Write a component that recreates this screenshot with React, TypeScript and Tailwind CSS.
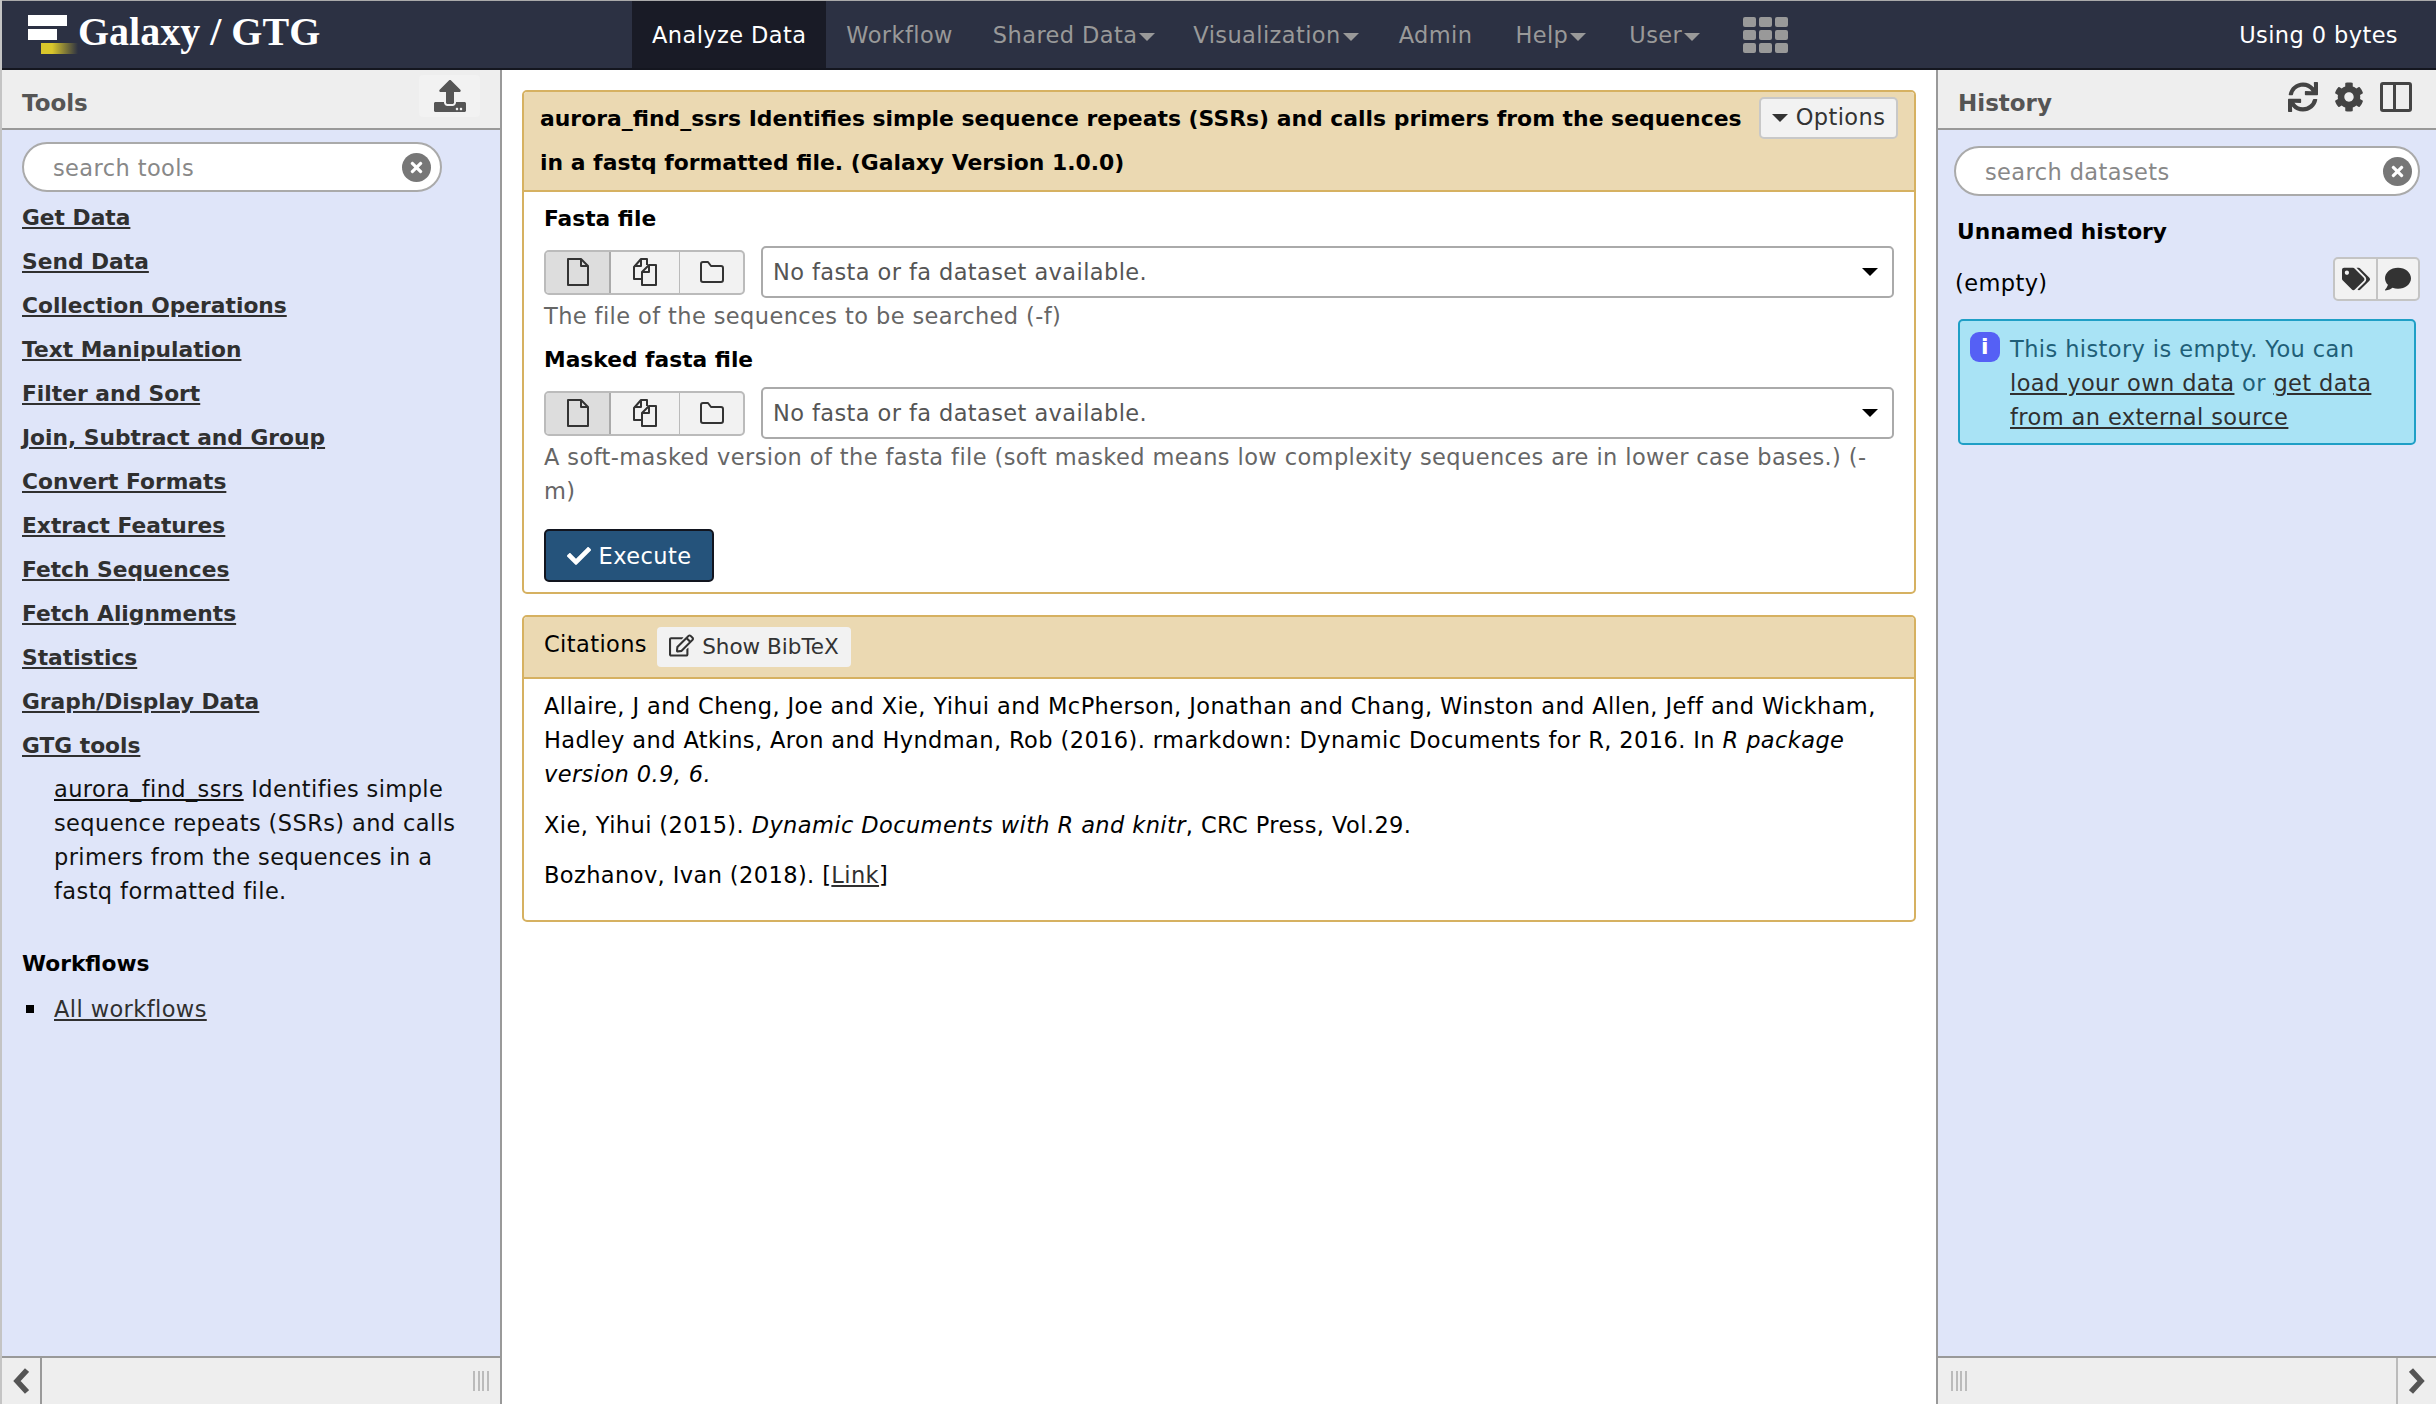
import React from "react";
import {
  FaCheck,
  FaCog,
  FaComment,
  FaRegEdit,
  FaSync,
  FaTags,
  FaTimes,
  FaUpload,
} from "react-icons/fa";

const navItems = [
  { label: "Workflow", className: "" },
  { label: "Shared Data", caret: true, className: "" },
  { label: "Visualization", caret: true, className: "-ml-[2px]" },
  { label: "Admin", className: "" },
  { label: "Help", caret: true, className: "ml-[3px]" },
  { label: "User", caret: true, className: "ml-[3px]" },
];

const toolSections = [
  "Get Data",
  "Send Data",
  "Collection Operations",
  "Text Manipulation",
  "Filter and Sort",
  "Join, Subtract and Group",
  "Convert Formats",
  "Extract Features",
  "Fetch Sequences",
  "Fetch Alignments",
  "Statistics",
  "Graph/Display Data",
  "GTG tools",
];

function Logo() {
  return (
    <svg width="52" height="40" viewBox="0 0 52 40" className="shrink-0">
      <defs>
        <linearGradient id="logoYellow" x1="0" x2="1" y1="0" y2="0">
          <stop offset="0.3" stopColor="#d9c62b" />
          <stop offset="1" stopColor="#d9c62b" stopOpacity="0" />
        </linearGradient>
      </defs>
      <rect x="1" y="0" width="39" height="11" fill="#fff" />
      <rect x="1" y="14" width="29" height="11" fill="#fff" />
      <rect x="14" y="28" width="37" height="11" fill="url(#logoYellow)" />
    </svg>
  );
}

function Caret({ className }: { className: string }) {
  return <span className={`inline-block h-0 w-0 border-x-[8px] border-t-[8px] border-x-transparent ${className}`} />;
}

function NavGrid() {
  return (
    <div className="ml-[23px] grid grid-cols-3 gap-[3px]">
      {Array.from({ length: 9 }).map((_, i) => (
        <span key={i} className="h-[10px] w-[13px] rounded-[2px] bg-[#999]" />
      ))}
    </div>
  );
}

function TopBar() {
  return (
    <header className="flex h-[70px] shrink-0 items-center border-t border-b-2 border-t-[#aaa] border-b-[#14161f] bg-[#2c3143]">
      <div className="flex w-[630px] shrink-0 items-center pl-[25px]">
        <Logo />
        <span className="-ml-[1px] -mt-[6px] [font-family:'Liberation_Serif',serif] text-[40px] leading-none font-bold tracking-normal text-white">
          Galaxy / GTG
        </span>
      </div>
      <nav className="flex h-full items-center text-[22.5px]">
        <a className="flex h-full items-center bg-[#191b26] px-5 pt-[2px] text-white">Analyze Data</a>
        {navItems.map((item) => (
          <a key={item.label} className={`flex items-center px-5 pt-[2px] text-[#999] ${item.className}`}>
            {item.label}
            {item.caret && <Caret className="ml-[2px] mt-[2px] border-t-[#999]" />}
          </a>
        ))}
        <NavGrid />
      </nav>
      <span className="ml-auto pr-[38px] pt-[2px] text-[22.5px] text-white">Using 0 bytes</span>
    </header>
  );
}

function PanelHeader({ title, children }: { title: string; children: React.ReactNode }) {
  return (
    <div className="flex h-[60px] shrink-0 items-center justify-between border-b-2 border-[#999] bg-[#eee] pl-[20px]">
      <span className="pt-[8px] text-[23px] font-bold tracking-normal text-[#555]">{title}</span>
      {children}
    </div>
  );
}

function SearchBox({ placeholder, className }: { placeholder: string; className: string }) {
  return (
    <div className={`flex h-[50px] items-center justify-between rounded-full border-2 border-[#aaa] bg-white pl-[29px] text-[22.5px] text-[#888] ${className}`}>
      <span className="pt-[1px]">{placeholder}</span>
      <ClearIcon />
    </div>
  );
}

function ClearIcon() {
  return (
    <span className="flex h-[29px] w-[29px] items-center justify-center rounded-full bg-[#777] text-white">
      <FaTimes size={17} />
    </span>
  );
}

function Chevron({ dir }: { dir: "left" | "right" }) {
  return (
    <svg width="16" height="26" viewBox="0 0 16 26" fill="none" stroke="#555" strokeWidth="5.5">
      <path d={dir === "left" ? "M14 2 L4 13 L14 24" : "M2 2 L12 13 L2 24"} />
    </svg>
  );
}

function PanelFooter({ side }: { side: "left" | "right" }) {
  const handle = (
    <div className="flex h-[20px] w-[16px] justify-between">
      {[0, 1, 2, 3].map((i) => (
        <span key={i} className="h-full w-[2px] bg-[#bbb]" />
      ))}
    </div>
  );
  return (
    <div className="flex h-[48px] shrink-0 items-center border-t-2 border-[#999] bg-[#eee]">
      {side === "left" ? (
        <>
          <div className="flex h-full w-[40px] items-center justify-center border-r-2 border-[#999]">
            <Chevron dir="left" />
          </div>
          <div className="ml-auto mr-[11px]">{handle}</div>
        </>
      ) : (
        <>
          <div className="ml-[13px]">{handle}</div>
          <div className="ml-auto flex h-full w-[40px] items-center justify-center border-l-2 border-[#bbb]">
            <Chevron dir="right" />
          </div>
        </>
      )}
    </div>
  );
}

function ToolPanel() {
  return (
    <aside className="flex w-[500px] shrink-0 flex-col border-r-2 border-[#999]">
      <PanelHeader title="Tools">
        <span className="mb-[6px] mr-[20px] flex h-[42px] w-[61px] items-center justify-center rounded-[4px] bg-[#f2f2f2] text-[#555]">
          <FaUpload size={32} />
        </span>
      </PanelHeader>
      <div className="flex-1 bg-[#dfe5f9] px-[20px] pt-[12px] text-[22.5px] leading-[34px] text-[#111]">
        <SearchBox placeholder="search tools" className="w-[420px] pr-[9px]" />
        <ul className="mt-[9px] flex flex-col gap-[10px]">
          {toolSections.map((name) => (
            <li key={name} className="text-[21.75px] font-bold tracking-normal text-[#303030]">
              <a className="underline">{name}</a>
            </li>
          ))}
        </ul>
        <p className="mb-0 ml-[32px] mt-[9px] w-[420px]">
          <a className="underline">aurora_find_ssrs</a> Identifies simple sequence repeats (SSRs) and calls primers from the sequences in a fastq formatted file.
        </p>
        <h4 className="mt-[39px] text-[21.75px] font-bold tracking-normal text-black">Workflows</h4>
        <div className="mt-[11px] flex items-center">
          <span className="ml-[4px] h-[8px] w-[8px] bg-black" />
          <a className="ml-[20px] text-[#303030] underline">All workflows</a>
        </div>
      </div>
      <PanelFooter side="left" />
    </aside>
  );
}

function FilesIcon() {
  return (
    <svg width="26" height="30" viewBox="0 0 26 30" fill="none" stroke="#333" strokeWidth="2" strokeLinejoin="round">
      <path d="M10 22 H2 V10 L9 2 H15 V8" />
      <path d="M9 2 V9 H2" />
      <path d="M10 15 L17 8 H24 V28 H10 Z" />
      <path d="M17 8 V15 H10" />
    </svg>
  );
}

function FileIcon() {
  return (
    <svg width="24" height="30" viewBox="0 0 24 30" fill="none" stroke="#333" strokeWidth="2" strokeLinejoin="round">
      <path d="M2 2 H15 L22 9 V28 H2 Z" />
      <path d="M15 2 V9 H22" />
    </svg>
  );
}

function FolderIcon() {
  return (
    <svg width="26" height="24" viewBox="0 0 26 24" fill="none" stroke="#333" strokeWidth="2" strokeLinejoin="round">
      <path d="M2 20 V4 Q2 2 4 2 H9 L12 6 H22 Q24 6 24 8 V20 Q24 22 22 22 H4 Q2 22 2 20 Z" />
    </svg>
  );
}

function DatasetField() {
  return (
    <div className="flex items-center">
      <div className="flex h-[45px] w-[201px] overflow-hidden rounded-[5px] border-2 border-[#bbb] bg-[#f2f2f2]">
        <span className="flex w-[65px] items-center justify-center border-r-2 border-[#aaa] bg-[#ddd]">
          <FileIcon />
        </span>
        <span className="flex w-[69px] items-center justify-center border-r border-[#bbb]">
          <FilesIcon />
        </span>
        <span className="flex flex-1 items-center justify-center">
          <FolderIcon />
        </span>
      </div>
      <div className="ml-[16px] flex h-[52px] flex-1 items-center justify-between rounded-[5px] border-2 border-[#aaa] bg-white pl-[10px] pr-[14px] text-[22.5px] text-[#555]">
        <span>No fasta or fa dataset available.</span>
        <Caret className="border-t-black" />
      </div>
    </div>
  );
}

function ToolForm() {
  return (
    <section className="overflow-hidden rounded-[5px] border-2 border-[#d6b161]">
      <div className="flex items-start justify-between border-b-2 border-[#d6b161] bg-[#ebd9b2] px-[16px] py-[5px]">
        <div className="w-[1210px] text-[21.9px] leading-[44px] font-bold tracking-normal text-black">
          aurora_find_ssrs Identifies simple sequence repeats (SSRs) and calls primers from the sequences in a fastq formatted file. (Galaxy Version 1.0.0)
        </div>
        <button className="flex h-[42px] w-[139px] shrink-0 items-center justify-center gap-[8px] rounded-[5px] border-2 border-[#c8c8c8] bg-[#f2f2f2] text-[22.5px] text-[#333]">
          <Caret className="border-t-[#333]" />
          Options
        </button>
      </div>
      <div className="px-[20px] pb-[10px] pt-[10px] text-[22.5px] leading-[34px]">
        <div className="mb-[10px] text-[21.75px] font-bold tracking-normal text-black">Fasta file</div>
        <DatasetField />
        <div className="mt-[1px] text-[#666]">The file of the sequences to be searched (-f)</div>
        <div className="mb-[10px] mt-[10px] text-[21.75px] font-bold tracking-normal text-black">Masked fasta file</div>
        <DatasetField />
        <div className="mt-[1px] text-[#666]">
          A soft-masked version of the fasta file (soft masked means low complexity sequences are in lower case bases.) (-m)
        </div>
        <button className="mt-[21px] flex h-[53px] w-[170px] items-center justify-center gap-[8px] rounded-[5px] border-2 border-[#12151f] bg-[#25537b] text-white">
          <FaCheck size={24} />
          Execute
        </button>
      </div>
    </section>
  );
}

function Citations() {
  return (
    <section className="mt-[21px] overflow-hidden rounded-[5px] border-2 border-[#d6b161]">
      <div className="flex h-[62px] items-center border-b-2 border-[#d6b161] bg-[#ebd9b2] pl-[20px] text-[22.5px]">
        <span className="mb-[4px] text-black">Citations</span>
        <button className="ml-[10px] flex h-[40px] w-[194px] items-center justify-center gap-[8px] rounded-[4px] bg-[#f2f2f2] text-[21.5px] tracking-normal text-[#333]">
          <FaRegEdit size={25} className="mb-[4px]" />
          Show BibTeX
        </button>
      </div>
      <div className="px-[20px] pb-[28px] pt-[10px] text-[22.5px] leading-[34px] text-black">
        <p>
          Allaire, J and Cheng, Joe and Xie, Yihui and McPherson, Jonathan and Chang, Winston and Allen, Jeff and Wickham, Hadley and Atkins, Aron and Hyndman, Rob (2016). rmarkdown: Dynamic Documents for R, 2016. In <em>R package version 0.9, 6.</em>
        </p>
        <p className="mt-[17px]">
          Xie, Yihui (2015). <em>Dynamic Documents with R and knitr</em>, CRC Press, Vol.29.
        </p>
        <p className="mt-[16px]">
          Bozhanov, Ivan (2018). [<a className="text-[#303030] underline">Link</a>]
        </p>
      </div>
    </section>
  );
}

function HistoryPanel() {
  return (
    <aside className="flex w-[500px] shrink-0 flex-col border-l-2 border-[#999]">
      <PanelHeader title="History">
        <div className="mb-[4px] mr-[24px] flex items-center gap-[16px] text-[#444]">
          <FaSync size={30} />
          <FaCog size={30} />
          <span className="flex h-[30px] w-[32px] rounded-[3px] border-[3px] border-[#444]">
            <span className="h-full w-[13px] border-r-[3px] border-[#444]" />
          </span>
        </div>
      </PanelHeader>
      <div className="flex-1 bg-[#dfe5f9] px-[16px] pt-[16px] text-[22.5px] leading-[34px] text-black">
        <SearchBox placeholder="search datasets" className="w-[466px] pr-[6px]" />
        <div className="ml-[3px] mt-[19px] text-[21.75px] font-bold tracking-normal">Unnamed history</div>
        <div className="mt-[8px] flex items-center justify-between">
          <span className="ml-[1px] mt-[8px]">(empty)</span>
          <div className="flex h-[44px] w-[87px] rounded-[5px] border-2 border-[#c4c4c4] bg-[#f2f2f2] text-[#333]">
            <span className="flex w-[43px] items-center justify-center border-r-2 border-[#c4c4c4]">
              <FaTags size={28} />
            </span>
            <span className="flex flex-1 items-center justify-center">
              <FaComment size={26} />
            </span>
          </div>
        </div>
        <div className="ml-[4px] mt-[18px] flex w-[458px] rounded-[5px] border-2 border-[#1f9fc6] bg-[#a9e3f5] pb-[9px] pl-[10px] pr-[8px] pt-[11px] text-[#1f5f78]">
          <span className="flex h-[30px] w-[30px] shrink-0 items-center justify-center rounded-[9px] bg-[#5560f5] text-[22px] font-bold text-white">
            i
          </span>
          <p className="ml-[10px]">
            This history is empty. You can{" "}
            <a className="text-[#303030] underline">load your own data</a> or{" "}
            <a className="text-[#303030] underline">get data from an external source</a>
          </p>
        </div>
      </div>
      <PanelFooter side="right" />
    </aside>
  );
}

export default function App() {
  return (
    <div className="flex h-[1404px] w-[2436px] flex-col overflow-hidden bg-[#c4c4c4] pl-[2px] tracking-[0.4px] [font-family:'DejaVu_Sans',sans-serif]">
      <TopBar />
      <div className="flex min-h-0 flex-1">
        <ToolPanel />
        <main className="min-w-0 flex-1 bg-white px-[20px] pt-[20px]">
          <ToolForm />
          <Citations />
        </main>
        <HistoryPanel />
      </div>
    </div>
  );
}
